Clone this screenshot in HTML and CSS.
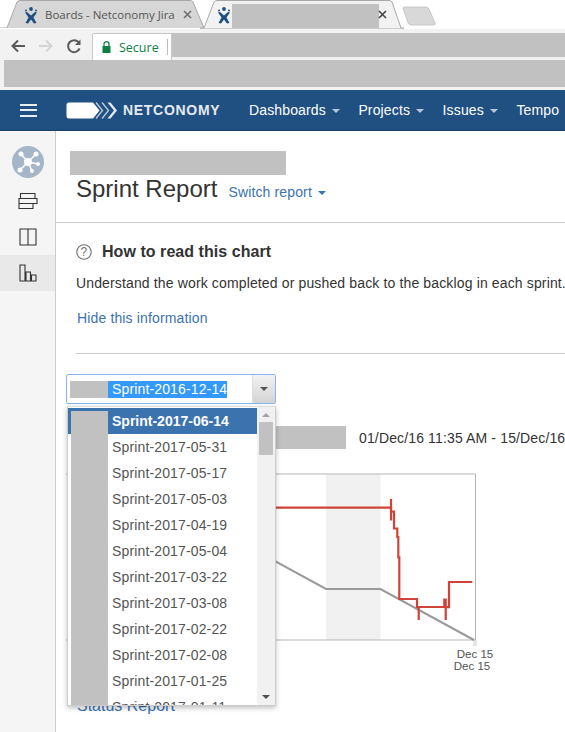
FILE: index.html
```html
<!DOCTYPE html>
<html lang="en">
<head>
<meta charset="UTF-8">
<meta name="viewport" content="width=device-width, initial-scale=1.0">
<title>Sprint Report</title>
<link rel="stylesheet" href="styles.css">
</head>
<body>

<div class="tabstrip">
    <div class="tab tab-back">
        <svg class="tab-shape" width="208" height="28" viewBox="0 0 208 28"><path d="M0 28 L7 28 L17 2 Q18 0.5 20 0.5 L190 0.5 Q192 0.5 193 2 L204 28" fill="#d6d6d6" stroke="#a8a8a8"/></svg>
        <svg class="tab-icon" width="14" height="18" viewBox="0 0 14 18"><use href="#jira"/></svg>
        <span class="tab-title">Boards - Netconomy Jira</span>
        <svg class="tab-close" width="9" height="9" viewBox="0 0 9 9"><path d="M1 1L8 8M8 1L1 8" stroke="#707070" stroke-width="1.6"/></svg>
    </div>
    <div class="tab tab-active">
        <svg class="tab-shape" width="204" height="29" viewBox="0 0 204 29"><path d="M0 28 L4 28 L14 2 Q15 0.5 17 0.5 L189 0.5 Q191 0.5 192 2 L201 28 L204 28 L204 29 L0 29 Z" fill="#f2f2f2" stroke="#a8a8a8"/></svg>
        <svg class="tab-icon" width="14" height="18" viewBox="0 0 14 18"><use href="#jira"/></svg>
        <span class="redact tab-redact"></span>
        <svg class="tab-close" width="9" height="9" viewBox="0 0 9 9"><path d="M1 1L8 8M8 1L1 8" stroke="#444" stroke-width="1.6"/></svg>
    </div>
    <svg class="newtab" width="36" height="20" viewBox="0 0 36 20"><path d="M1 2 Q1 1 3 1 L24 1 Q26 1 27 3 L33 17 Q34 19 31 19 L9 19 Q7 19 6 17 Z" fill="#d8d8d8" stroke="#c8c8c8"/></svg>
</div>

<div class="toolbar">
    <svg class="tool" width="16" height="16" viewBox="0 0 16 16"><path d="M15 8H3M8 2.5L2.5 8L8 13.5" fill="none" stroke="#5a5a5a" stroke-width="2"/></svg>
    <svg class="tool" width="16" height="16" viewBox="0 0 16 16"><path d="M1 8H13M8 2.5L13.5 8L8 13.5" fill="none" stroke="#d4d4d4" stroke-width="2"/></svg>
    <svg class="tool" width="16" height="16" viewBox="0 0 16 16"><path d="M13.6 10.5A6 6 0 1 1 12.6 4.2" fill="none" stroke="#5a5a5a" stroke-width="2"/><path d="M14.5 1.5V7H9Z" fill="#5a5a5a"/></svg>
    <div class="omnibox">
        <div class="secure">
            <svg width="9" height="12" viewBox="0 0 9 12"><path d="M2 5V3.2a2.5 2.5 0 0 1 5 0V5" fill="none" stroke="#0b8043" stroke-width="1.3"/><rect x="0.5" y="5" width="8" height="7" fill="#0b8043"/></svg>
            <span>Secure</span>
            <i class="secure-sep"></i>
        </div>
        <div class="redact url-redact"></div>
    </div>
</div>
<div class="bookmarks"><div class="redact"></div></div>
<div class="chrome-gap"></div>

<nav class="topnav">
    <span class="burger"><i></i><i></i><i></i></span>
    <svg class="logo" width="52" height="17" viewBox="0 0 52 17">
        <path d="M3 0.5H27L33.5 8.5L27 16.5H3Q0.5 16.5 0.5 14V3Q0.5 0.5 3 0.5Z" fill="#fff"/>
        <path d="M30 0.5L36.5 8.5L30 16.5M36 0.5L42.5 8.5L36 16.5" fill="none" stroke="#b8c9db" stroke-width="1.4"/>
        <path d="M41.5 0.5H44.5L51 8.5L44.5 16.5H41.5L48 8.5Z" fill="#e4eaf1"/>
    </svg>
    <span class="brand">NETCONOMY</span>
    <a class="navlink" href="#">Dashboards<i class="caret"></i></a>
    <a class="navlink" href="#">Projects<i class="caret"></i></a>
    <a class="navlink" href="#">Issues<i class="caret"></i></a>
    <a class="navlink" href="#">Tempo</a>
</nav>

<div class="page">
    <aside class="sidebar">
        <svg class="avatar" width="32" height="32" viewBox="0 0 32 32">
            <circle cx="16" cy="16" r="16" fill="#a5b6c9"/>
            <path d="M16 16L9 8M16 16L24 8M16 16L8 24M16 16L20 25M16 16L26 18" stroke="#fff" stroke-width="1.5"/>
            <circle cx="16" cy="16" r="4" fill="#fff"/>
            <circle cx="9" cy="8" r="2.5" fill="#fff"/><circle cx="24" cy="8" r="2.5" fill="#fff"/>
            <circle cx="8" cy="24" r="2.5" fill="#fff"/><circle cx="20" cy="25" r="2" fill="#fff"/><circle cx="26" cy="18" r="2" fill="#fff"/>
        </svg>
        <div class="side-item">
            <svg width="20" height="18" viewBox="0 0 20 18"><path d="M2.5 1.5H17V6.5H2.5ZM1 6.5H19V11.5H1ZM1 11.5H15V16.5H1Z" fill="none" stroke="#333" stroke-width="1.1"/></svg>
        </div>
        <div class="side-item">
            <svg width="18" height="18" viewBox="0 0 18 18"><path d="M1 1H17V17H1ZM9 1V17" fill="none" stroke="#333" stroke-width="1.1"/></svg>
        </div>
        <div class="side-item side-active">
            <svg width="18" height="18" viewBox="0 0 18 18"><path d="M1 1H6V17H1ZM7 8H11.5V17H7ZM12.5 11H17V17H12.5Z" fill="none" stroke="#333" stroke-width="1.1"/></svg>
        </div>
    </aside>

    <main class="content">
        <header class="report-head">
            <div class="redact head-redact"></div>
            <div class="title-row">
                <h1>Sprint Report</h1>
                <a class="link" href="#">Switch report<i class="caret caret-blue"></i></a>
            </div>
        </header>

        <section class="help">
            <div class="help-title">
                <svg width="16" height="16" viewBox="0 0 16 16"><circle cx="8" cy="8" r="7.2" fill="none" stroke="#707070" stroke-width="1.1"/><text x="8" y="12" text-anchor="middle" class="help-mark">?</text></svg>
                <h2>How to read this chart</h2>
            </div>
            <p>Understand the work completed or pushed back to the backlog in each sprint.</p>
            <a class="link hide-link" href="#">Hide this information</a>
        </section>

        <div class="sprint-picker">
            <div class="picker-input">
                <span class="redact picker-redact"></span>
                <span class="picker-value">Sprint-2016-12-14</span>
                <span class="picker-btn"><i class="caret caret-dark"></i></span>
            </div>
            <div class="dropdown">
                <ul class="sprint-list">
                    <li class="selected">Sprint-2017-06-14</li>
                    <li>Sprint-2017-05-31</li>
                    <li>Sprint-2017-05-17</li>
                    <li>Sprint-2017-05-03</li>
                    <li>Sprint-2017-04-19</li>
                    <li>Sprint-2017-05-04</li>
                    <li>Sprint-2017-03-22</li>
                    <li>Sprint-2017-03-08</li>
                    <li>Sprint-2017-02-22</li>
                    <li>Sprint-2017-02-08</li>
                    <li>Sprint-2017-01-25</li>
                    <li>Sprint-2017-01-11</li>
                </ul>
                <div class="redact list-redact"></div>
                <div class="scrollbar">
                    <i class="arrow-up"></i>
                    <b class="thumb"></b>
                    <i class="arrow-down"></i>
                </div>
            </div>
        </div>

        <div class="date-row">
            <div class="redact date-redact"></div>
            <span>01/Dec/16 11:35 AM - 15/Dec/16</span>
        </div>

        <svg class="chart" width="440" height="206" viewBox="66 470 440 206">
            <rect x="326" y="474" width="54.5" height="166" fill="#f1f1f1"/>
            <path d="M475.5 474V640H66M66 474H475.5" fill="none" stroke="#b5b5b5"/>
            <path d="M474 640V646M476 640V646" stroke="#ccc"/>
            <path d="M200 520L326 589H380.5L474 640" fill="none" stroke="#999" stroke-width="2"/>
            <g fill="none" stroke="#d04437" stroke-width="2.2">
                <path d="M200 507.7H391V511.7H394V528.5H397.3V537H398.3V557.3H399.3V599H417V607H445.6V607.2H449V582H472.3"/>
                <path d="M391 499V520.5"/>
                <path d="M418.7 607V620"/>
                <path d="M445.7 598.5V620M444.3 598.5V607"/>
            </g>
            <text x="475" y="658" text-anchor="middle" class="tick">Dec 15</text>
            <text x="472" y="670" text-anchor="middle" class="tick">Dec 15</text>
        </svg>

        <a class="link status-link" href="#">Status Report</a>
    </main>
</div>

<svg class="defs" width="0" height="0">
    <symbol id="jira" viewBox="0 0 14 18">
        <circle cx="7" cy="3" r="1.9" fill="#205081"/>
        <circle cx="2" cy="4.5" r="1" fill="#205081"/><circle cx="12" cy="4.5" r="1" fill="#205081"/>
        <path d="M1 6.5L3 6L7 9.5L11 6L13 6.5L9.5 11.5L12.5 17L10 17.5L7 13.5L4 17.5L1.5 17L4.5 11.5Z" fill="#205081"/>
    </symbol>
</svg>

</body>
</html>
```

FILE: styles.css
```css
* {
    box-sizing: border-box;
}

body {
    margin: 0;
    width: 565px;
    height: 732px;
    overflow: hidden;
    background-color: #fff;
    font-family: "Liberation Sans", Arial, sans-serif;
    font-size: 14px;
    letter-spacing: 0.14px;
    color: #333;
}

.redact {
    background-color: #c1c1c1;
}

.defs {
    display: block;
}

/* browser chrome */
.tabstrip {
    display: flex;
    height: 29px;
    overflow: hidden;
    background-color: #fff;
}

.tab {
    position: relative;
    display: flex;
    align-items: center;
    height: 29px;
    flex: none;
}

.tab-shape {
    position: absolute;
    left: 0;
    top: 0;
}

.tab-icon,
.tab-title,
.tab-close,
.tab-redact {
    position: relative;
}

.tab-back {
    width: 200px;
    padding-left: 24px;
}

.tab-active {
    width: 202px;
    padding-left: 17px;
}

.tab-icon {
    flex: none;
}

.tab-title {
    margin-left: 7px;
    width: 138px;
    font-family: "Open Sans", sans-serif;
    font-size: 11.5px;
    letter-spacing: 0;
    color: #555;
    white-space: nowrap;
}

.tab-close {
    flex: none;
}

.tab-redact {
    flex: none;
    width: 147px;
    height: 24px;
    margin-top: 2px;
    margin-right: -1px;
    margin-left: 1px;
}

.newtab {
    flex: none;
    margin-top: 6px;
}

.toolbar {
    display: flex;
    align-items: flex-start;
    height: 31px;
    padding-left: 10px;
    background-color: #f2f2f2;
}

.tool {
    flex: none;
    margin-top: 9px;
    margin-right: 12px;
}

.omnibox {
    display: flex;
    flex: 1;
    height: 24px;
    margin-top: 4px;
    margin-left: -2px;
    min-width: 0;
}

.secure {
    display: flex;
    align-items: center;
    flex: none;
    width: 80px;
    height: 27px;
    padding-left: 9px;
    background-color: #fff;
    border: 1px solid #c8c8c8;
    border-bottom: none;
    border-radius: 2px 0 0 0;
    font-family: "Open Sans", sans-serif;
    font-size: 12.5px;
    letter-spacing: 0;
    color: #0b8043;
}

.secure span {
    margin-left: 8px;
}

.secure-sep {
    width: 1px;
    height: 16px;
    margin-left: 8px;
    background-color: #bbb;
}

.url-redact {
    flex: 1;
}

.bookmarks {
    height: 27px;
    padding-left: 4px;
    background-color: #f2f2f2;
}

.bookmarks .redact {
    height: 27px;
}

.chrome-gap {
    height: 3px;
    background-color: #f4f4f4;
}

/* jira nav */
.topnav {
    display: flex;
    align-items: center;
    height: 41px;
    padding-left: 20px;
    background-color: #205081;
    border-bottom: 1px solid #1a3f66;
    color: #fff;
    white-space: nowrap;
}

.topnav > * {
    flex: none;
}

.burger {
    display: flex;
    flex-direction: column;
    gap: 3.5px;
    width: 17px;
}

.burger i {
    display: block;
    height: 2px;
    background-color: #e8edf3;
}

.logo {
    margin-left: 29px;
}

.brand {
    margin-left: 5px;
    width: 126px;
    font-weight: bold;
    font-size: 14px;
    letter-spacing: 0.7px;
    color: #e4eaf1;
}

.navlink {
    color: #fff;
    text-decoration: none;
    margin-right: 18.5px;
}

.caret {
    display: inline-block;
    margin-left: 6px;
    vertical-align: 2px;
    border-left: 4px solid transparent;
    border-right: 4px solid transparent;
    border-top: 4px solid #b9c8d9;
}

/* page */
.page {
    display: flex;
    height: 601px;
}

.sidebar {
    flex: none;
    width: 56px;
    background-color: #f5f5f5;
    border-right: 1px solid #ccc;
}

.avatar {
    display: block;
    margin: 15px 0 0 12px;
}

.side-item {
    display: flex;
    align-items: center;
    justify-content: center;
    height: 36px;
}

.avatar + .side-item {
    margin-top: 5px;
}

.side-active {
    background-color: #e9e9e9;
}

.content {
    flex: 1;
    min-width: 0;
    overflow: hidden;
    white-space: nowrap;
}

.link {
    color: #3b73af;
    text-decoration: none;
}

.report-head {
    height: 92px;
    padding: 20px 0 0 20px;
    border-bottom: 1px solid #ccc;
}

.head-redact {
    width: 216px;
    height: 24px;
    margin-left: -6px;
}

.title-row {
    display: flex;
    align-items: baseline;
    gap: 11px;
}

h1 {
    margin: 0;
    font-size: 24px;
    font-weight: normal;
    line-height: 28px;
    letter-spacing: 0;
    color: #333;
}

.caret-blue {
    border-top-color: #3b73af;
}

.help {
    height: 131px;
    margin-left: 20px;
    padding-top: 21px;
    border-bottom: 1px solid #ccc;
}

.help-title {
    display: flex;
    align-items: center;
    gap: 10px;
    height: 16px;
}

.help-mark {
    font-size: 12px;
    fill: #707070;
}

h2 {
    margin: 0;
    font-size: 16px;
    line-height: 16px;
    font-weight: bold;
    letter-spacing: 0.05px;
    color: #333;
}

.help p {
    margin: 15px 0 0;
    line-height: 16px;
}

.hide-link {
    display: block;
    margin: 19px 0 0 1px;
    line-height: 16px;
}

/* sprint picker */
.sprint-picker {
    position: relative;
    width: 210px;
    height: 30px;
    margin: 20px 0 0 10px;
}

.picker-input {
    display: flex;
    align-items: center;
    height: 30px;
    padding-left: 3px;
    background-color: #fff;
    border: 1px solid #8ab4ef;
    border-radius: 2px;
}

.picker-redact {
    width: 38px;
    height: 17px;
}

.picker-value {
    padding-left: 4px;
    line-height: 17px;
    background-color: #3399ff;
    color: #fff;
}

.picker-btn {
    display: flex;
    align-items: center;
    justify-content: center;
    width: 23px;
    height: 28px;
    margin-left: auto;
    background: linear-gradient(#f2f2f2, #d4d4d4);
    border-left: 1px solid #ddd;
}

.caret-dark {
    margin: 0;
    border-top-color: #555;
}

.dropdown {
    position: absolute;
    left: 1px;
    top: 32px;
    z-index: 2;
    width: 209px;
    height: 300px;
    padding-top: 1px;
    overflow: hidden;
    background-color: #fff;
    border: 1px solid #ccc;
    border-top-color: #ddd;
    box-shadow: 0 2px 5px rgba(0, 0, 0, 0.25);
}

.sprint-list {
    margin: 0;
    padding: 0;
    width: 190px;
    list-style: none;
    color: #555;
}

.sprint-list li {
    height: 26px;
    padding-left: 44px;
    line-height: 26px;
}

.sprint-list .selected {
    background-color: #3b73af;
    color: #fff;
    font-weight: bold;
    letter-spacing: 0;
}

.list-redact {
    position: absolute;
    left: 3px;
    top: 4px;
    width: 37px;
    height: 296px;
}

.scrollbar {
    position: absolute;
    right: 0;
    top: 0;
    display: flex;
    flex-direction: column;
    align-items: center;
    width: 18px;
    height: 298px;
    padding-top: 6px;
    background-color: #f1f1f1;
}

.thumb {
    display: block;
    width: 14px;
    height: 33px;
    margin-top: 5px;
    background-color: #c1c1c1;
}

.arrow-up,
.arrow-down {
    display: block;
    border-left: 4px solid transparent;
    border-right: 4px solid transparent;
}

.arrow-up {
    border-bottom: 4px solid #a3a3a3;
}

.arrow-down {
    margin-top: auto;
    margin-bottom: 6px;
    border-top: 4px solid #505050;
}

/* sprint details */
.date-row {
    display: flex;
    align-items: center;
    gap: 13px;
    height: 23px;
    margin: 22px 0 0 218px;
}

.date-redact {
    flex: none;
    width: 72px;
    height: 23px;
}

.chart {
    display: block;
    margin: 21px 0 0 10px;
}

.tick {
    font-size: 11.5px;
    letter-spacing: 0;
    fill: #555;
}

.status-link {
    display: block;
    margin: 21px 0 0 21px;
    font-size: 16px;
    line-height: 18px;
    letter-spacing: 0;
}
```
